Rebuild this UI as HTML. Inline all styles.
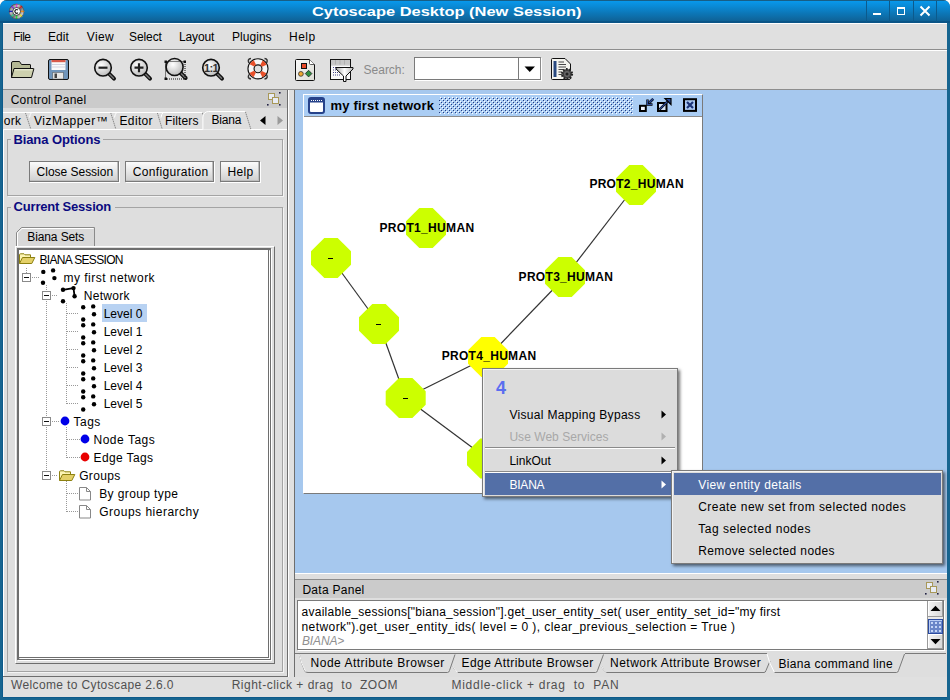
<!DOCTYPE html>
<html><head><meta charset="utf-8"><title>Cytoscape Desktop</title>
<style>
*{margin:0;padding:0;box-sizing:border-box}
html,body{width:950px;height:700px;overflow:hidden;background:#fff;font-family:"Liberation Sans",sans-serif;font-size:12px;color:#000}
.a{position:absolute}
.t{position:absolute;white-space:pre;font-family:"Liberation Sans",sans-serif}
svg.a{overflow:visible}
</style></head><body>
<div class="a" style="left:0px;top:0px;width:950px;height:700px;background:#176590;border-radius:7px 7px 0 0"></div>
<div class="a" style="left:2px;top:23px;width:1px;height:674px;background:#0e5a8a"></div>
<div class="a" style="left:3px;top:697px;width:944px;height:1px;background:#0e5a8a"></div>
<div class="a" style="left:0px;top:0px;width:950px;height:23px;background:linear-gradient(#185e85 0px,#185e85 1px,#0898ec 1px,#0f6296 21px,#0b5587 21px,#0b5587 23px);border-radius:7px 7px 0 0"></div>
<div class="t" style="left:312.00px;top:5px;font-size:13px;line-height:13px;font-weight:bold;transform:scaleX(1.2642);transform-origin:0.00px 0;color:#fff;">Cytoscape Desktop (New Session)</div>
<div class="a" style="left:866px;top:1px;width:1px;height:21px;background:#0c5a8c"></div>
<div class="a" style="left:889px;top:1px;width:1px;height:21px;background:#0c5a8c"></div>
<div class="a" style="left:913px;top:1px;width:1px;height:21px;background:#0c5a8c"></div>
<div class="a" style="left:936px;top:1px;width:1px;height:21px;background:#0c5a8c"></div>
<div class="a" style="left:873px;top:13px;width:8px;height:2px;background:#fff"></div>
<div class="a" style="left:897px;top:7px;width:8px;height:8px;border:1.5px solid #fff;border-top-width:2.5px"></div>
<svg class="a" style="left:919px;top:5px;" width="12" height="12" viewBox="0 0 12 12"><path d="M1.5 1.5 L10.5 10.5 M10.5 1.5 L1.5 10.5" stroke="#fff" stroke-width="2"/></svg>
<svg class="a" style="left:8px;top:3px;" width="18" height="18" viewBox="0 0 18 18"><defs><linearGradient id="cdg" x1="0" y1="0" x2="1" y2="1"><stop offset="0" stop-color="#3a3a3a"/><stop offset=".35" stop-color="#c8c8c8"/><stop offset=".55" stop-color="#707070"/><stop offset=".8" stop-color="#d0d0d0"/><stop offset="1" stop-color="#505050"/></linearGradient></defs>
<circle cx="8.6" cy="8.4" r="7.6" fill="url(#cdg)"/>
<g stroke-width="1.4"><path d="M8.6 0.8V4.5" stroke="#e040e0"/><path d="M14 3L11.4 5.6" stroke="#e02020"/><path d="M16.2 8.4H12.3" stroke="#f09020"/><path d="M14 13.8L11.4 11.2" stroke="#e8e020"/><path d="M8.6 16V12.3" stroke="#20e040"/><path d="M3.2 13.8L5.8 11.2" stroke="#30d090"/><path d="M1 8.4H4.9" stroke="#2020c0"/><path d="M3.2 3L5.8 5.6" stroke="#8030e0"/></g>
<circle cx="8.6" cy="8.4" r="7.3" fill="none" stroke="#333" stroke-width=".8" opacity=".6"/><circle cx="8.6" cy="8.4" r="3.9" fill="#fff" stroke="#222" stroke-width=".8"/>
<path d="M9.9 7.2A1.7 1.9 0 1 0 9.9 9.6" fill="none" stroke="#222" stroke-width="1.2"/></svg>
<div class="a" style="left:3px;top:23px;width:944px;height:1px;background:#fff"></div>
<div class="a" style="left:3px;top:24px;width:944px;height:25px;background:#e0e0e0"></div>
<div class="a" style="left:3px;top:49px;width:944px;height:1px;background:#8e8e8e"></div>
<div class="a" style="left:3px;top:50px;width:944px;height:1px;background:#fff"></div>
<div class="t" style="left:13.20px;top:31px;font-size:12px;line-height:12px;letter-spacing:-0.521px;">File</div>
<div class="t" style="left:48.00px;top:31px;font-size:12px;line-height:12px;letter-spacing:0.052px;">Edit</div>
<div class="t" style="left:86.80px;top:31px;font-size:12px;line-height:12px;letter-spacing:0.358px;">View</div>
<div class="t" style="left:129.00px;top:31px;font-size:12px;line-height:12px;letter-spacing:-0.084px;">Select</div>
<div class="t" style="left:179.00px;top:31px;font-size:12px;line-height:12px;letter-spacing:-0.139px;">Layout</div>
<div class="t" style="left:232.00px;top:31px;font-size:12px;line-height:12px;letter-spacing:0.040px;">Plugins</div>
<div class="t" style="left:289.00px;top:31px;font-size:12px;line-height:12px;letter-spacing:0.465px;">Help</div>
<div class="a" style="left:3px;top:51px;width:944px;height:38px;background:#e0e0e0"></div>
<div class="a" style="left:3px;top:89px;width:944px;height:1px;background:#8e8e8e"></div>
<svg class="a" style="left:10px;top:60px;" width="26" height="20" viewBox="0 0 26 20"><path d="M1.5 17.5 L1.5 3 Q1.5 1.5 3 1.5 L9.5 1.5 L11.5 4.5 L20 4.5 Q20.5 4.5 20.5 5 L20.5 8.5 Z" fill="#b4b894" stroke="#111" stroke-width="1"/>
<path d="M4 8.5 L23.5 8.5 Q24 8.5 23.8 9 L21.5 17.5 L1.5 17.5 Z" fill="#cdd0ae" stroke="#111" stroke-width="1"/>
<path d="M4.8 9.8 L22.3 9.8" stroke="#eef0dc" stroke-width="1"/></svg>
<svg class="a" style="left:47px;top:58px;" width="23" height="23" viewBox="0 0 23 23"><rect x="1.5" y="1.5" width="20" height="20" rx="1.5" fill="#7095bb" stroke="#111" stroke-width="1"/>
<rect x="4.5" y="2" width="14" height="10" fill="#fafafa"/><rect x="4.5" y="2" width="14" height="2.2" fill="#d85a4a"/>
<path d="M5 6.5H18M5 9H18" stroke="#c8c8d8" stroke-width=".8"/>
<rect x="5.8" y="14.5" width="10.5" height="6.5" fill="#e6e6e6" stroke="#555" stroke-width=".5"/><rect x="7.5" y="15.5" width="2.5" height="4.5" fill="#444"/></svg>
<svg class="a" style="left:90px;top:55px;" width="30" height="30" viewBox="0 0 30 30"><defs><radialGradient id="mg13" cx="0.4" cy="0.35" r="0.7"><stop offset="0" stop-color="#fff"/><stop offset="1" stop-color="#b8b8b8"/></radialGradient></defs>
<path d="M18.5 18.2 L24 23.7" stroke="#111" stroke-width="4" stroke-linecap="round"/>
<path d="M19.5 19.2 L23.5 23.2" stroke="#777" stroke-width="1.4" stroke-linecap="round"/>
<circle cx="13" cy="12.7" r="8.3" fill="url(#mg13)" stroke="#111" stroke-width="1.6"/><path d="M8.5 12.7H17.5" stroke="#222" stroke-width="2.2"/></svg>
<svg class="a" style="left:126px;top:55px;" width="30" height="30" viewBox="0 0 30 30"><defs><radialGradient id="mg13" cx="0.4" cy="0.35" r="0.7"><stop offset="0" stop-color="#fff"/><stop offset="1" stop-color="#b8b8b8"/></radialGradient></defs>
<path d="M18.5 18.2 L24 23.7" stroke="#111" stroke-width="4" stroke-linecap="round"/>
<path d="M19.5 19.2 L23.5 23.2" stroke="#777" stroke-width="1.4" stroke-linecap="round"/>
<circle cx="13" cy="12.7" r="8.3" fill="url(#mg13)" stroke="#111" stroke-width="1.6"/><path d="M8.5 12.7H17.5M13 8.2V17.2" stroke="#222" stroke-width="2.2"/></svg>
<svg class="a" style="left:162px;top:55px;" width="30" height="30" viewBox="0 0 30 30"><defs><radialGradient id="mg12" cx="0.4" cy="0.35" r="0.7"><stop offset="0" stop-color="#fff"/><stop offset="1" stop-color="#b8b8b8"/></radialGradient></defs>
<path d="M18.1 17.5 L23.6 23" stroke="#111" stroke-width="4" stroke-linecap="round"/>
<path d="M19.1 18.5 L23.1 22.5" stroke="#777" stroke-width="1.4" stroke-linecap="round"/>
<circle cx="12.6" cy="12" r="8.5" fill="url(#mg12)" stroke="#111" stroke-width="1.6"/><rect x="3.5" y="6.5" width="19.5" height="17.5" fill="none" stroke="#111" stroke-width="1" stroke-dasharray="1 1"/><rect x="2.5" y="5.5" width="2.5" height="2.5" fill="#111"/><rect x="21.5" y="5.5" width="2.5" height="2.5" fill="#111"/><rect x="2.5" y="22.5" width="2.5" height="2.5" fill="#111"/></svg>
<svg class="a" style="left:198px;top:55px;" width="30" height="30" viewBox="0 0 30 30"><defs><radialGradient id="mg13" cx="0.4" cy="0.35" r="0.7"><stop offset="0" stop-color="#fff"/><stop offset="1" stop-color="#b8b8b8"/></radialGradient></defs>
<path d="M18.5 18.2 L24 23.7" stroke="#111" stroke-width="4" stroke-linecap="round"/>
<path d="M19.5 19.2 L23.5 23.2" stroke="#777" stroke-width="1.4" stroke-linecap="round"/>
<circle cx="13" cy="12.7" r="8.3" fill="url(#mg13)" stroke="#111" stroke-width="1.6"/><text x="13" y="16.8" font-family="Liberation Sans" font-weight="bold" font-size="11" text-anchor="middle" fill="#333" letter-spacing="-0.6">1:1</text></svg>
<svg class="a" style="left:245px;top:56px;" width="26" height="26" viewBox="0 0 26 26"><g stroke="#333" stroke-width="1.4" fill="none"><path d="M4 7Q2 3 6 2.5M19.5 2.5Q23.5 3 21.5 7M21.5 18.5Q23.5 22.5 19.5 23M6 23Q2 22.5 4 18.5"/></g>
<circle cx="13" cy="12.8" r="7" fill="none" stroke="#111" stroke-width="7.2"/>
<circle cx="13" cy="12.8" r="7" fill="none" stroke="#f6f6f6" stroke-width="5"/>
<circle cx="13" cy="12.8" r="7" fill="none" stroke="#e8502a" stroke-width="5" stroke-dasharray="4.2 6.8" stroke-dashoffset="-3.4"/></svg>
<svg class="a" style="left:294px;top:58px;" width="22" height="24" viewBox="0 0 22 24"><defs><linearGradient id="pg" x1="0" y1="0" x2="1" y2="1"><stop offset="0" stop-color="#fafafa"/><stop offset="1" stop-color="#dcdcd4"/></linearGradient></defs>
<path d="M1.5 2.5Q1.5 1.5 2.5 1.5H15.5L20.5 6.5V21.5Q20.5 22.5 19.5 22.5H2.5Q1.5 22.5 1.5 21.5Z" fill="url(#pg)" stroke="#111"/>
<path d="M15.5 1.5V5.5Q15.5 6.5 16.5 6.5H20.5" fill="#fff" stroke="#333" stroke-width=".8"/>
<rect x="7.5" y="5.5" width="5" height="5" fill="#e84a28" stroke="#111" stroke-width="1"/>
<circle cx="6.9" cy="15.9" r="2.4" fill="#f0a830" stroke="#333" stroke-width=".8"/>
<path d="M14.6 12.3L17.9 15.6L14.6 18.9L11.3 15.6Z" fill="#309040" stroke="#222" stroke-width=".8"/></svg>
<svg class="a" style="left:329px;top:58px;" width="25" height="25" viewBox="0 0 25 25"><defs><linearGradient id="fg" x1="0" y1="0" x2="1" y2="0"><stop offset="0" stop-color="#a8a8a8"/><stop offset=".5" stop-color="#fff"/><stop offset="1" stop-color="#b8b8b8"/></linearGradient></defs>
<rect x="1.5" y="1.5" width="20" height="20" fill="#fafafa" stroke="#111"/>
<rect x="2" y="2" width="19" height="4.5" fill="#c8c8c8"/><path d="M6.5 2V6.5M11 2V6.5M15.5 2V6.5" stroke="#aaa" stroke-width=".8"/><path d="M2 7H21" stroke="#999" stroke-width=".6"/>
<path d="M4 9.5H12M4 12H12M4 14.5H12M4 17H12" stroke="#44448a" stroke-width="1" stroke-dasharray="1 1"/>
<path d="M7 9.5H24V11L17 18V23.5H14.5V18L7 11Z" fill="url(#fg)" stroke="#111" stroke-width="1"/></svg>
<div class="t" style="left:363.60px;top:64px;font-size:12px;line-height:12px;letter-spacing:-0.020px;color:#8a8a8a;">Search:</div>
<div class="a" style="left:414px;top:57px;width:127px;height:23px;background:#fff;border:1px solid #7a7a7a;border-right-color:#8a8a8a;box-shadow:1px 1px 0 #fff"></div>
<div class="a" style="left:518px;top:58px;width:1px;height:21px;background:#7a7a7a"></div>
<svg class="a" style="left:524px;top:66px;" width="12" height="7" viewBox="0 0 12 7"><path d="M0.5 0.5H11L5.75 6Z" fill="#000"/></svg>
<svg class="a" style="left:550px;top:57px;" width="25" height="25" viewBox="0 0 25 25"><path d="M1.5 2.5Q1.5 1.5 2.5 1.5H15L20.5 7V21Q20.5 22.5 19 22.5H2.5Q1.5 22.5 1.5 21.5Z" fill="#f4f4ee" stroke="#111"/>
<rect x="3.5" y="4" width="3" height="16" fill="#2a4a80"/>
<path d="M8.5 5H14M8.5 7.5H16M8.5 10H16M8.5 12.5H13M8.5 15H12M8.5 17.5H12" stroke="#333" stroke-width=".9"/>
<g transform="translate(17,17)"><circle r="5" fill="#555" stroke="#222" stroke-width="2.2" stroke-dasharray="1.6 1.54"/><circle r="3.6" fill="#666" stroke="#333" stroke-width=".8"/><circle r="1.5" fill="#222"/></g></svg>
<div class="a" style="left:3px;top:90px;width:285px;height:586px;background:#dedede"></div>
<div class="a" style="left:3px;top:90px;width:285px;height:18px;background:#cbcbcb"></div>
<div class="t" style="left:10.70px;top:94px;font-size:12px;line-height:12px;letter-spacing:0.230px;">Control Panel</div>
<svg class="a" style="left:267px;top:92px;" width="14" height="14" viewBox="0 0 14 14"><rect x="1.5" y="1.5" width="6" height="6" fill="#e8ecf4" stroke="#a89858" stroke-width="1"/><rect x="5.5" y="5.5" width="6" height="6" fill="#e8ecf4" stroke="#a89858" stroke-width="1"/><rect x="0" y="12" width="1.6" height="1.6" fill="#224"/><rect x="12" y="12" width="1.6" height="1.6" fill="#224"/><rect x="12" y="0" width="1.6" height="1.6" fill="#224"/></svg>
<div class="a" style="left:3px;top:108px;width:285px;height:22px;background:#dedede"></div>
<div class="a" style="left:3px;top:129px;width:285px;height:1px;background:#fff"></div>
<svg class="a" style="left:3px;top:108px;" width="285" height="22" viewBox="0 0 285 22">
<path d="M0 4.5H199" stroke="#fff"/>
<path d="M22.5 5L27.8 21" stroke="#8a8a8a" stroke-dasharray="1.5 .6"/><path d="M107.8 5L112.8 21" stroke="#8a8a8a" stroke-dasharray="1.5 .6"/><path d="M154.4 5L159.2 21" stroke="#8a8a8a" stroke-dasharray="1.5 .6"/><path d="M199.3 5L201 8" stroke="#8a8a8a"/>
<path d="M28.5 4.5Q27 6 26.5 9.5M113.6 4.5Q112 6 111.5 9.5M160 4.5Q158.5 6 158 9.5" fill="none" stroke="#fff"/>
<path d="M199.5 21.5V9Q200 4 205 3.5H242L247.8 21.5Z" fill="#dedede"/>
<path d="M199.9 21.5V9Q200.5 3.8 205.5 3.5H241.9" fill="none" stroke="#fff"/>
<path d="M242.5 4L247.8 21" stroke="#8a8a8a" stroke-dasharray="1.5 .6"/>
<path d="M0 21.5H199.5M248 21.5H285" stroke="#fff"/>
<path d="M257 12.5L262.5 8V17Z" fill="#000"/>
<path d="M280 12.5L274.5 8V17Z" fill="#9a9a9a"/>
</svg>
<div class="t" style="left:3.80px;top:115px;font-size:12px;line-height:12px;letter-spacing:0.215px;">ork</div>
<div class="t" style="left:33.90px;top:115px;font-size:12px;line-height:12px;letter-spacing:0.518px;">VizMapper™</div>
<div class="t" style="left:119.50px;top:115px;font-size:12px;line-height:12px;letter-spacing:0.350px;">Editor</div>
<div class="t" style="left:165.00px;top:115px;font-size:12px;line-height:12px;letter-spacing:0.139px;">Filters</div>
<div class="t" style="left:211.40px;top:114px;font-size:12px;line-height:12px;letter-spacing:-0.179px;">Biana</div>
<div class="a" style="left:3px;top:130px;width:1px;height:546px;background:#fff"></div>
<div class="a" style="left:288px;top:90px;width:7px;height:587px;background:#e0e0e0"></div>
<div class="a" style="left:7px;top:139px;width:276px;height:57px;border:1px solid #a4a4a4;box-shadow:1px 1px 0 #f4f4f4"></div>
<div class="a" style="left:11px;top:134px;width:92px;height:12px;background:#dedede"></div>
<div class="t" style="left:13.40px;top:133px;font-size:13px;line-height:13px;font-weight:bold;letter-spacing:-0.082px;color:#0a0a80;">Biana Options</div>
<div class="a" style="left:29px;top:161px;width:90px;height:21px;background:linear-gradient(#fbfbfb,#e6e6e6 50%,#cfcfcf);border:1px solid #7a7a7a;box-shadow:1px 1px 0 #fff, inset -1px -1px 0 #bdbdbd"></div>
<div class="t" style="left:36.60px;top:166px;font-size:12px;line-height:12px;letter-spacing:-0.019px;">Close Session</div>
<div class="a" style="left:125px;top:161px;width:89px;height:21px;background:linear-gradient(#fbfbfb,#e6e6e6 50%,#cfcfcf);border:1px solid #7a7a7a;box-shadow:1px 1px 0 #fff, inset -1px -1px 0 #bdbdbd"></div>
<div class="t" style="left:132.70px;top:166px;font-size:12px;line-height:12px;letter-spacing:0.350px;">Configuration</div>
<div class="a" style="left:220px;top:161px;width:40px;height:21px;background:linear-gradient(#fbfbfb,#e6e6e6 50%,#cfcfcf);border:1px solid #7a7a7a;box-shadow:1px 1px 0 #fff, inset -1px -1px 0 #bdbdbd"></div>
<div class="t" style="left:227.50px;top:166px;font-size:12px;line-height:12px;letter-spacing:0.298px;">Help</div>
<div class="a" style="left:7px;top:207px;width:276px;height:465px;border:1px solid #a4a4a4;box-shadow:1px 1px 0 #f4f4f4"></div>
<div class="a" style="left:11px;top:201px;width:104px;height:12px;background:#dedede"></div>
<div class="t" style="left:13.60px;top:199.5px;font-size:13px;line-height:13px;font-weight:bold;letter-spacing:-0.198px;color:#0a0a80;">Current Session</div>
<svg class="a" style="left:16px;top:226px;" width="80" height="22" viewBox="0 0 80 22"><path d="M0.5 21V6.5L5.5 1.5H78.5V21" fill="#d8d8d8" stroke="#8a8a8a"/><path d="M1.5 21V7L6 2.5H77.5" fill="none" stroke="#fff"/></svg>
<div class="t" style="left:27.30px;top:230.7px;font-size:12px;line-height:12px;letter-spacing:-0.115px;">Biana Sets</div>
<div class="a" style="left:15px;top:246px;width:260px;height:418px;border-left:1px solid #fff;border-top:1px solid #fff;border-right:1px solid #6e6e6e;border-bottom:1px solid #6e6e6e"></div>
<div class="a" style="left:17px;top:248px;width:254px;height:412px;border-left:2px solid #6e6e6e;border-top:2px solid #6e6e6e;border-right:1px solid #6e6e6e;border-bottom:1px solid #6e6e6e;box-shadow:1px 1px 0 #fff"></div>
<div class="a" style="left:19px;top:250px;width:250px;height:408px;background:#fff;border-right:1px solid #6e6e6e;border-bottom:1px solid #6e6e6e;box-shadow:1px 1px 0 #fff"></div>
<div class="a" style="left:287px;top:90px;width:1px;height:587px;background:#6e6e6e"></div>
<div class="a" style="left:288px;top:90px;width:1px;height:587px;background:#fff"></div>
<div class="a" style="left:294px;top:90px;width:1px;height:587px;background:#6e6e6e"></div>
<div class="a" style="left:3px;top:676px;width:285px;height:1px;background:#6e6e6e"></div>
<svg class="a" style="left:19px;top:253px;" width="17" height="12" viewBox="0 0 17 12"><path d="M0.5 10.5V1.8Q0.5 0.8 1.5 0.8H5L6 1.8H11.5V4" fill="#fcf4b4" stroke="#8c8010" stroke-width="1"/><path d="M0.5 10.5L3.5 4.5H15.8L12.8 10.5Z" fill="#e4d068" stroke="#8c8010" stroke-width="1"/></svg>
<div class="t" style="left:39.50px;top:254px;font-size:12px;line-height:12px;letter-spacing:-0.669px;">BIANA SESSION</div>
<div class="a" style="left:26px;top:268px;width:1px;height:5px;background:repeating-linear-gradient(180deg,#999 0 1px,transparent 1px 2px)"></div>
<svg class="a" style="left:22px;top:273px;" width="9" height="9" viewBox="0 0 9 9"><rect x="0.5" y="0.5" width="8" height="8" fill="#fff" stroke="#8a8a8a"/><path d="M2 4.5H7" stroke="#111" stroke-width="1"/></svg>
<div class="a" style="left:32px;top:277px;width:7px;height:1px;background:repeating-linear-gradient(90deg,#999 0 1px,transparent 1px 2px)"></div>
<svg class="a" style="left:38px;top:266px;" width="20" height="20" viewBox="0 0 20 20"><circle cx="5.3" cy="5.9" r="2.2" fill="#000"/><circle cx="15.1" cy="4.4" r="2.2" fill="#000"/><circle cx="16.4" cy="12.1" r="2.2" fill="#000"/><circle cx="5" cy="16.8" r="2.2" fill="#000"/></svg>
<div class="t" style="left:63.60px;top:272px;font-size:12px;line-height:12px;letter-spacing:0.466px;">my first network</div>
<div class="a" style="left:46px;top:285px;width:1px;height:6px;background:repeating-linear-gradient(180deg,#999 0 1px,transparent 1px 2px)"></div>
<svg class="a" style="left:42px;top:291px;" width="9" height="9" viewBox="0 0 9 9"><rect x="0.5" y="0.5" width="8" height="8" fill="#fff" stroke="#8a8a8a"/><path d="M2 4.5H7" stroke="#111" stroke-width="1"/></svg>
<div class="a" style="left:52px;top:295px;width:6px;height:1px;background:repeating-linear-gradient(90deg,#999 0 1px,transparent 1px 2px)"></div>
<svg class="a" style="left:58px;top:284px;" width="20" height="20" viewBox="0 0 20 20"><circle cx="5" cy="5.8" r="2.2" fill="#000"/><circle cx="15.5" cy="4.1" r="2.2" fill="#000"/><circle cx="16.6" cy="12.3" r="2.2" fill="#000"/><circle cx="5" cy="17.2" r="2.2" fill="#000"/><path d="M5 5.8L15.5 4.1L16.6 12.3" fill="none" stroke="#000" stroke-width="1.8"/></svg>
<div class="t" style="left:83.80px;top:290px;font-size:12px;line-height:12px;letter-spacing:0.298px;">Network</div>
<div class="a" style="left:46px;top:301px;width:1px;height:175px;background:repeating-linear-gradient(180deg,#999 0 1px,transparent 1px 2px)"></div>
<div class="a" style="left:66px;top:303px;width:1px;height:101px;background:repeating-linear-gradient(180deg,#999 0 1px,transparent 1px 2px)"></div>
<div class="a" style="left:67px;top:313px;width:12px;height:1px;background:repeating-linear-gradient(90deg,#999 0 1px,transparent 1px 2px)"></div>
<svg class="a" style="left:78px;top:303px;" width="20" height="20" viewBox="0 0 20 20"><circle cx="5.2" cy="4.3" r="2.2" fill="#000"/><circle cx="15.2" cy="3.4" r="2.2" fill="#000"/><circle cx="16" cy="11.3" r="2.2" fill="#000"/><circle cx="5.2" cy="16.5" r="2.2" fill="#000"/></svg>
<div class="a" style="left:102px;top:304px;width:45px;height:18px;background:#b8d2f2"></div>
<div class="t" style="left:103.70px;top:308px;font-size:12px;line-height:12px;">Level 0</div>
<div class="a" style="left:67px;top:331px;width:12px;height:1px;background:repeating-linear-gradient(90deg,#999 0 1px,transparent 1px 2px)"></div>
<svg class="a" style="left:78px;top:321px;" width="20" height="20" viewBox="0 0 20 20"><circle cx="5.2" cy="4.3" r="2.2" fill="#000"/><circle cx="15.2" cy="3.4" r="2.2" fill="#000"/><circle cx="16" cy="11.3" r="2.2" fill="#000"/><circle cx="5.2" cy="16.5" r="2.2" fill="#000"/></svg>
<div class="t" style="left:103.70px;top:326px;font-size:12px;line-height:12px;">Level 1</div>
<div class="a" style="left:67px;top:349px;width:12px;height:1px;background:repeating-linear-gradient(90deg,#999 0 1px,transparent 1px 2px)"></div>
<svg class="a" style="left:78px;top:339px;" width="20" height="20" viewBox="0 0 20 20"><circle cx="5.2" cy="4.3" r="2.2" fill="#000"/><circle cx="15.2" cy="3.4" r="2.2" fill="#000"/><circle cx="16" cy="11.3" r="2.2" fill="#000"/><circle cx="5.2" cy="16.5" r="2.2" fill="#000"/></svg>
<div class="t" style="left:103.70px;top:344px;font-size:12px;line-height:12px;">Level 2</div>
<div class="a" style="left:67px;top:367px;width:12px;height:1px;background:repeating-linear-gradient(90deg,#999 0 1px,transparent 1px 2px)"></div>
<svg class="a" style="left:78px;top:357px;" width="20" height="20" viewBox="0 0 20 20"><circle cx="5.2" cy="4.3" r="2.2" fill="#000"/><circle cx="15.2" cy="3.4" r="2.2" fill="#000"/><circle cx="16" cy="11.3" r="2.2" fill="#000"/><circle cx="5.2" cy="16.5" r="2.2" fill="#000"/></svg>
<div class="t" style="left:103.70px;top:362px;font-size:12px;line-height:12px;">Level 3</div>
<div class="a" style="left:67px;top:385px;width:12px;height:1px;background:repeating-linear-gradient(90deg,#999 0 1px,transparent 1px 2px)"></div>
<svg class="a" style="left:78px;top:375px;" width="20" height="20" viewBox="0 0 20 20"><circle cx="5.2" cy="4.3" r="2.2" fill="#000"/><circle cx="15.2" cy="3.4" r="2.2" fill="#000"/><circle cx="16" cy="11.3" r="2.2" fill="#000"/><circle cx="5.2" cy="16.5" r="2.2" fill="#000"/></svg>
<div class="t" style="left:103.70px;top:380px;font-size:12px;line-height:12px;">Level 4</div>
<div class="a" style="left:67px;top:403px;width:12px;height:1px;background:repeating-linear-gradient(90deg,#999 0 1px,transparent 1px 2px)"></div>
<svg class="a" style="left:78px;top:393px;" width="20" height="20" viewBox="0 0 20 20"><circle cx="5.2" cy="4.3" r="2.2" fill="#000"/><circle cx="15.2" cy="3.4" r="2.2" fill="#000"/><circle cx="16" cy="11.3" r="2.2" fill="#000"/><circle cx="5.2" cy="16.5" r="2.2" fill="#000"/></svg>
<div class="t" style="left:103.70px;top:398px;font-size:12px;line-height:12px;">Level 5</div>
<svg class="a" style="left:42px;top:417px;" width="9" height="9" viewBox="0 0 9 9"><rect x="0.5" y="0.5" width="8" height="8" fill="#fff" stroke="#8a8a8a"/><path d="M2 4.5H7" stroke="#111" stroke-width="1"/></svg>
<div class="a" style="left:52px;top:421px;width:8px;height:1px;background:repeating-linear-gradient(90deg,#999 0 1px,transparent 1px 2px)"></div>
<svg class="a" style="left:59.5px;top:416px;" width="10" height="10" viewBox="0 0 10 10"><circle cx="5" cy="5" r="4.4" fill="#0000e8"/></svg>
<div class="t" style="left:73.50px;top:416px;font-size:12px;line-height:12px;letter-spacing:0.484px;">Tags</div>
<div class="a" style="left:66px;top:427px;width:1px;height:31px;background:repeating-linear-gradient(180deg,#999 0 1px,transparent 1px 2px)"></div>
<div class="a" style="left:67px;top:439px;width:13px;height:1px;background:repeating-linear-gradient(90deg,#999 0 1px,transparent 1px 2px)"></div>
<svg class="a" style="left:79.5px;top:434px;" width="10" height="10" viewBox="0 0 10 10"><circle cx="5" cy="5" r="4.4" fill="#0000e8"/></svg>
<div class="t" style="left:93.50px;top:434px;font-size:12px;line-height:12px;letter-spacing:0.516px;">Node Tags</div>
<div class="a" style="left:67px;top:457px;width:13px;height:1px;background:repeating-linear-gradient(90deg,#999 0 1px,transparent 1px 2px)"></div>
<svg class="a" style="left:79.5px;top:452px;" width="10" height="10" viewBox="0 0 10 10"><circle cx="5" cy="5" r="4.4" fill="#e80000"/></svg>
<div class="t" style="left:93.50px;top:452px;font-size:12px;line-height:12px;letter-spacing:0.387px;">Edge Tags</div>
<svg class="a" style="left:42px;top:471px;" width="9" height="9" viewBox="0 0 9 9"><rect x="0.5" y="0.5" width="8" height="8" fill="#fff" stroke="#8a8a8a"/><path d="M2 4.5H7" stroke="#111" stroke-width="1"/></svg>
<div class="a" style="left:52px;top:475px;width:6px;height:1px;background:repeating-linear-gradient(90deg,#999 0 1px,transparent 1px 2px)"></div>
<svg class="a" style="left:59px;top:470px;" width="17" height="12" viewBox="0 0 17 12"><path d="M0.5 10.5V1.8Q0.5 0.8 1.5 0.8H5L6 1.8H11.5V4" fill="#fcf4b4" stroke="#8c8010" stroke-width="1"/><path d="M0.5 10.5L3.5 4.5H15.8L12.8 10.5Z" fill="#e4d068" stroke="#8c8010" stroke-width="1"/></svg>
<div class="t" style="left:79.20px;top:470px;font-size:12px;line-height:12px;letter-spacing:0.350px;">Groups</div>
<div class="a" style="left:66px;top:481px;width:1px;height:31px;background:repeating-linear-gradient(180deg,#999 0 1px,transparent 1px 2px)"></div>
<div class="a" style="left:67px;top:493px;width:12px;height:1px;background:repeating-linear-gradient(90deg,#999 0 1px,transparent 1px 2px)"></div>
<svg class="a" style="left:79px;top:487px;" width="13" height="14" viewBox="0 0 13 14"><path d="M0.5 0.5H7.5L11.5 4.5V13H0.5Z" fill="#fff" stroke="#888"/><path d="M7.5 0.5V4.5H11.5" fill="none" stroke="#888"/></svg>
<div class="t" style="left:99.20px;top:488px;font-size:12px;line-height:12px;letter-spacing:0.386px;">By group type</div>
<div class="a" style="left:67px;top:511px;width:12px;height:1px;background:repeating-linear-gradient(90deg,#999 0 1px,transparent 1px 2px)"></div>
<svg class="a" style="left:79px;top:505px;" width="13" height="14" viewBox="0 0 13 14"><path d="M0.5 0.5H7.5L11.5 4.5V13H0.5Z" fill="#fff" stroke="#888"/><path d="M7.5 0.5V4.5H11.5" fill="none" stroke="#888"/></svg>
<div class="t" style="left:99.20px;top:506px;font-size:12px;line-height:12px;letter-spacing:0.504px;">Groups hierarchy</div>
<div class="a" style="left:295px;top:90px;width:652px;height:483px;background:#a6c8ee"></div>
<div class="a" style="left:303px;top:94px;width:400px;height:400px;background:#fff;border-top:1px solid #fff;border-left:1px solid #fff;border-right:1px solid #7a7a7a;border-bottom:1px solid #7a7a7a"></div>
<div class="a" style="left:304px;top:95px;width:398px;height:21px;background:#aacdf4"></div>
<div class="a" style="left:304px;top:116px;width:398px;height:1px;background:#8c8c8c"></div>
<svg class="a" style="left:308px;top:97px;" width="18" height="18" viewBox="0 0 18 18"><rect x="1" y="1" width="15" height="15" rx="2" fill="#fff" stroke="#26428a" stroke-width="2"/><rect x="1" y="1" width="15" height="4.5" rx="1" fill="#26428a"/><path d="M3 3.5H14.5" stroke="#fff" stroke-width="1" stroke-dasharray="1 1"/></svg>
<div class="t" style="left:330.40px;top:99px;font-size:13px;line-height:13px;font-weight:bold;letter-spacing:0.208px;">my first network</div>
<svg class="a" style="left:439px;top:97px;" width="194" height="17" viewBox="0 0 194 17"><defs><pattern id="dp" width="4" height="4" patternUnits="userSpaceOnUse"><rect x="2" y="1" width="1" height="1" fill="#233a80"/><rect x="1" y="0" width="1" height="1" fill="#fff"/><rect x="0" y="3" width="1" height="1" fill="#233a80"/><rect x="3" y="2" width="1" height="1" fill="#fff"/></pattern></defs><rect x="0" y="0" width="194" height="17" fill="url(#dp)"/></svg>
<svg class="a" style="left:638px;top:97px;" width="17" height="16" viewBox="0 0 17 16"><rect x="2" y="8.8" width="5.8" height="5.2" fill="#f0f4ff" stroke="#000" stroke-width="2"/><path d="M15.2 1.8L10 7" stroke="#000" stroke-width="2.6"/><path d="M15.2 1.8L10 7" stroke="#2a4a9a" stroke-width="1.4"/><path d="M9.5 2.5V7.5H14.5" fill="none" stroke="#000" stroke-width="2.4"/><path d="M9.5 3V7.5H14" fill="none" stroke="#2a4a9a" stroke-width="1.2"/></svg>
<svg class="a" style="left:656px;top:97px;" width="17" height="16" viewBox="0 0 17 16"><rect x="2" y="6" width="8.5" height="8" fill="#d8e6fa" stroke="#000" stroke-width="2"/><path d="M3.5 12.5L13.5 2.5" stroke="#000" stroke-width="2.4"/><path d="M3.8 12.2L13.5 2.5" stroke="#2a4a9a" stroke-width="1.2"/><path d="M9 1.5H15V7.5Z" fill="#2a4a9a" stroke="#000" stroke-width="1.2"/></svg>
<svg class="a" style="left:682px;top:97px;" width="16" height="16" viewBox="0 0 16 16"><rect x="2" y="2.2" width="12" height="11.7" fill="#aac8f0" stroke="#000" stroke-width="2"/><path d="M5 5L11 11M11 5L5 11" stroke="#1c3478" stroke-width="2.2"/></svg>
<svg class="a" style="left:304px;top:117px;overflow:hidden" width="398" height="376" viewBox="0 0 398 376"><line x1="27" y1="141" x2="75" y2="207" stroke="#333" stroke-width="1.2"/><line x1="75" y1="207" x2="101.69999999999999" y2="281" stroke="#333" stroke-width="1.2"/><line x1="101.69999999999999" y1="281" x2="184" y2="240" stroke="#333" stroke-width="1.2"/><line x1="101.69999999999999" y1="281" x2="183" y2="341.6" stroke="#333" stroke-width="1.2"/><line x1="261" y1="160" x2="184" y2="240" stroke="#333" stroke-width="1.2"/><line x1="261" y1="160" x2="332" y2="68" stroke="#333" stroke-width="1.2"/><polygon points="115.3,91 128.7,91 142,104.3 142,117.7 128.7,131 115.3,131 102,117.7 102,104.3" fill="#ccff00"/><polygon points="325.3,48 338.7,48 352,61.3 352,74.7 338.7,88 325.3,88 312,74.7 312,61.3" fill="#ccff00"/><polygon points="254.3,140 267.7,140 281,153.3 281,166.7 267.7,180 254.3,180 241,166.7 241,153.3" fill="#ccff00"/><polygon points="177.3,220 190.7,220 204,233.3 204,246.7 190.7,260 177.3,260 164,246.7 164,233.3" fill="#ffff00"/><polygon points="20.3,121 33.7,121 47,134.3 47,147.7 33.7,161 20.3,161 7,147.7 7,134.3" fill="#ccff00"/><polygon points="68.3,187 81.7,187 95,200.3 95,213.7 81.7,227 68.3,227 55,213.7 55,200.3" fill="#ccff00"/><polygon points="94.99999999999999,261 108.39999999999999,261 121.69999999999999,274.3 121.69999999999999,287.7 108.39999999999999,301 94.99999999999999,301 81.69999999999999,287.7 81.69999999999999,274.3" fill="#ccff00"/><polygon points="176.3,321.6 189.7,321.6 203,334.90000000000003 203,348.3 189.7,361.6 176.3,361.6 163,348.3 163,334.90000000000003" fill="#ccff00"/></svg>
<div class="a" style="left:328px;top:257.7px;width:5px;height:1.8px;background:#000"></div>
<div class="a" style="left:376px;top:323.7px;width:5px;height:1.8px;background:#000"></div>
<div class="a" style="left:402.7px;top:397.7px;width:5px;height:1.8px;background:#000"></div>
<div class="t" style="left:379.40px;top:221.5px;font-size:12px;line-height:12px;font-weight:bold;letter-spacing:0.332px;">PROT1_HUMAN</div>
<div class="t" style="left:589.40px;top:178.3px;font-size:12px;line-height:12px;font-weight:bold;letter-spacing:0.282px;">PROT2_HUMAN</div>
<div class="t" style="left:518.60px;top:270.5px;font-size:12px;line-height:12px;font-weight:bold;letter-spacing:0.302px;">PROT3_HUMAN</div>
<div class="t" style="left:441.70px;top:350px;font-size:12px;line-height:12px;font-weight:bold;letter-spacing:0.302px;">PROT4_HUMAN</div>
<div class="a" style="left:482px;top:368px;width:196px;height:129px;background:#dcdcdc;border:1px solid #7a7a7a;box-shadow:2px 2px 3px rgba(0,0,0,0.55),inset 1px 1px 0 #f4f4f4"></div>
<div class="t" style="left:496.00px;top:379px;font-size:18px;line-height:18px;font-weight:bold;color:#5a6ef0;">4</div>
<div class="t" style="left:509.40px;top:409px;font-size:12px;line-height:12px;letter-spacing:0.314px;">Visual Mapping Bypass</div>
<svg class="a" style="left:661px;top:410px;" width="6" height="9" viewBox="0 0 6 9"><path d="M0.5 0.5L5 4.5L0.5 8.5Z" fill="#000"/></svg>
<div class="t" style="left:509.40px;top:431px;font-size:12px;line-height:12px;letter-spacing:0.041px;color:#a8a8a8;">Use Web Services</div>
<svg class="a" style="left:661px;top:432px;" width="6" height="9" viewBox="0 0 6 9"><path d="M0.5 0.5L5 4.5L0.5 8.5Z" fill="#b0b0b0"/></svg>
<div class="a" style="left:485px;top:447px;width:190px;height:1px;background:#8a8a8a"></div>
<div class="a" style="left:485px;top:448px;width:190px;height:1px;background:#fff"></div>
<div class="t" style="left:509.40px;top:455px;font-size:12px;line-height:12px;letter-spacing:0.013px;">LinkOut</div>
<svg class="a" style="left:661px;top:456px;" width="6" height="9" viewBox="0 0 6 9"><path d="M0.5 0.5L5 4.5L0.5 8.5Z" fill="#000"/></svg>
<div class="a" style="left:485px;top:471px;width:190px;height:1px;background:#8a8a8a"></div>
<div class="a" style="left:485px;top:472px;width:190px;height:1px;background:#fff"></div>
<div class="a" style="left:485px;top:473px;width:192px;height:22px;background:#536fa7"></div>
<div class="t" style="left:509.40px;top:479px;font-size:12px;line-height:12px;letter-spacing:-0.202px;color:#fff;">BIANA</div>
<svg class="a" style="left:661px;top:480px;" width="6" height="9" viewBox="0 0 6 9"><path d="M0.5 0.5L5 4.5L0.5 8.5Z" fill="#fff"/></svg>
<div class="a" style="left:671px;top:470px;width:272px;height:94px;background:#dcdcdc;border:1px solid #7a7a7a;box-shadow:2px 2px 3px rgba(0,0,0,0.55),inset 1px 1px 0 #f4f4f4"></div>
<div class="a" style="left:674px;top:473px;width:267px;height:22px;background:#536fa7"></div>
<div class="t" style="left:698.20px;top:479px;font-size:12px;line-height:12px;letter-spacing:0.404px;color:#fff;">View entity details</div>
<div class="t" style="left:698.20px;top:501px;font-size:12px;line-height:12px;letter-spacing:0.467px;">Create new set from selected nodes</div>
<div class="t" style="left:698.20px;top:523px;font-size:12px;line-height:12px;letter-spacing:0.523px;">Tag selected nodes</div>
<div class="t" style="left:698.20px;top:544.5px;font-size:12px;line-height:12px;letter-spacing:0.383px;">Remove selected nodes</div>
<div class="a" style="left:295px;top:573px;width:652px;height:104px;background:#dedede"></div>
<div class="a" style="left:298px;top:601px;width:645px;height:48px;background:#fff"></div>
<div class="a" style="left:326px;top:600px;width:6px;height:1px;background:#333"></div>
<div class="a" style="left:363px;top:600px;width:6px;height:1px;background:#333"></div>
<div class="a" style="left:387px;top:600px;width:6px;height:1px;background:#333"></div>
<div class="a" style="left:555px;top:600px;width:6px;height:1px;background:#333"></div>
<div class="a" style="left:593px;top:600px;width:6px;height:1px;background:#333"></div>
<div class="a" style="left:608px;top:600px;width:6px;height:1px;background:#333"></div>
<div class="a" style="left:437px;top:600px;width:2px;height:1px;background:#555"></div>
<div class="a" style="left:521px;top:600px;width:2px;height:1px;background:#555"></div>
<div class="a" style="left:587px;top:600px;width:2px;height:1px;background:#555"></div>
<div class="a" style="left:295px;top:573px;width:652px;height:27px;background:#dedede"></div>
<div class="a" style="left:295px;top:579px;width:652px;height:1px;background:#8c8c8c"></div>
<div class="a" style="left:295px;top:580px;width:652px;height:18px;background:#cbcbcb"></div>
<div class="t" style="left:302.40px;top:584px;font-size:12px;line-height:12px;letter-spacing:0.277px;">Data Panel</div>
<svg class="a" style="left:925px;top:581px;" width="14" height="14" viewBox="0 0 14 14"><rect x="1.5" y="1.5" width="6" height="6" fill="#e8ecf4" stroke="#a89858" stroke-width="1"/><rect x="5.5" y="5.5" width="6" height="6" fill="#e8ecf4" stroke="#a89858" stroke-width="1"/><rect x="0" y="12" width="1.6" height="1.6" fill="#224"/><rect x="12" y="12" width="1.6" height="1.6" fill="#224"/><rect x="12" y="0" width="1.6" height="1.6" fill="#224"/></svg>
<div class="a" style="left:297px;top:600px;width:647px;height:50px;border:1px solid #7a7a7a;box-shadow:1px 1px 0 #fff"></div>
<div class="a" style="left:295px;top:573px;width:652px;height:1px;background:#fff"></div>
<div class="t" style="left:301.50px;top:606px;font-size:12px;line-height:12px;letter-spacing:0.277px;">available_sessions[&quot;biana_session&quot;].get_user_entity_set( user_entity_set_id=&quot;my first</div>
<div class="t" style="left:301.50px;top:621px;font-size:12px;line-height:12px;letter-spacing:0.426px;">network&quot;).get_user_entity_ids( level = 0 ), clear_previous_selection = True )</div>
<div class="t" style="left:302.00px;top:635px;font-size:12px;line-height:12px;font-style:italic;letter-spacing:-0.142px;color:#909090;">BIANA&gt;</div>
<div class="a" style="left:927px;top:601px;width:16px;height:48px;background:#e8e8e8;border-left:1px solid #9a9a9a"></div>
<div class="a" style="left:928px;top:601px;width:15px;height:16px;background:linear-gradient(90deg,#f4f4f4,#d8d8d8);border-right:1px solid #9a9a9a;border-bottom:1px solid #9a9a9a;box-shadow:inset 1px 1px 0 #fff"></div>
<svg class="a" style="left:930px;top:605px;" width="11" height="7" viewBox="0 0 11 7"><path d="M0.5 6L5.5 0.8L10.5 6Z" fill="#000"/></svg>
<div class="a" style="left:928px;top:619px;width:15px;height:15px;background:#6a86c8;border:1px solid #2a4aa0;box-shadow:inset 1px 1px 0 #b8ccf4;background-image:radial-gradient(circle,#c8d8f8 0.7px,transparent 1px);background-size:4px 4px;background-position:1px 1px"></div>
<div class="a" style="left:928px;top:634px;width:15px;height:15px;background:linear-gradient(90deg,#f4f4f4,#d8d8d8);border-right:1px solid #9a9a9a;border-bottom:1px solid #9a9a9a;box-shadow:inset 1px 1px 0 #fff"></div>
<svg class="a" style="left:930px;top:638px;" width="11" height="7" viewBox="0 0 11 7"><path d="M0.5 1L5.5 6.2L10.5 1Z" fill="#000"/></svg>
<svg class="a" style="left:295px;top:651px;" width="651" height="26" viewBox="0 0 651 26">
<path d="M0 2.5H472M610 2.5H651" stroke="#7a7a7a"/>
<path d="M4.5 3.5Q6 12 10 20.5Q11 21.5 13 21.5H152.5Q154 21.5 154.5 19.5L160 3.5" fill="none" stroke="#7a7a7a"/>
<path d="M4.5 3.5Q6 12 10.5 20.5" fill="none" stroke="#fff"/>
<path d="M158 15Q159 19 162.5 21.5H300.5Q302 21.5 302.5 19.5L308.5 3.5" fill="none" stroke="#7a7a7a"/>
<path d="M158 15Q159.5 19 162.5 21.5" fill="none" stroke="#fff"/>
<path d="M306.5 15Q308 19 311 21.5H469Q470.5 21.5 471 19.5L475 10" fill="none" stroke="#7a7a7a"/>
<path d="M306.5 15Q308 19 311 21.5" fill="none" stroke="#fff"/>
<path d="M472 3Q474 12 479.5 21.5" fill="none" stroke="#fff"/>
<path d="M479.5 21.5H601.5Q603 21.5 603.5 19.5L609.5 3" fill="none" stroke="#7a7a7a"/>
</svg>
<div class="t" style="left:310.60px;top:657px;font-size:12px;line-height:12px;letter-spacing:0.492px;">Node Attribute Browser</div>
<div class="t" style="left:461.50px;top:657px;font-size:12px;line-height:12px;letter-spacing:0.429px;">Edge Attribute Browser</div>
<div class="t" style="left:610.00px;top:657px;font-size:12px;line-height:12px;letter-spacing:0.501px;">Network Attribute Browser</div>
<div class="t" style="left:778.50px;top:658px;font-size:12px;line-height:12px;letter-spacing:0.320px;">Biana command line</div>
<div class="a" style="left:3px;top:677px;width:944px;height:20px;background:#e0e0e0"></div>
<div class="t" style="left:11.00px;top:679px;font-size:12px;line-height:12px;letter-spacing:0.367px;color:#505050;">Welcome to Cytoscape 2.6.0</div>
<div class="t" style="left:231.70px;top:679px;font-size:12px;line-height:12px;letter-spacing:0.497px;color:#505050;">Right-click + drag  to  ZOOM</div>
<div class="t" style="left:451.50px;top:679px;font-size:12px;line-height:12px;letter-spacing:0.725px;color:#505050;">Middle-click + drag  to  PAN</div>
</body></html>
